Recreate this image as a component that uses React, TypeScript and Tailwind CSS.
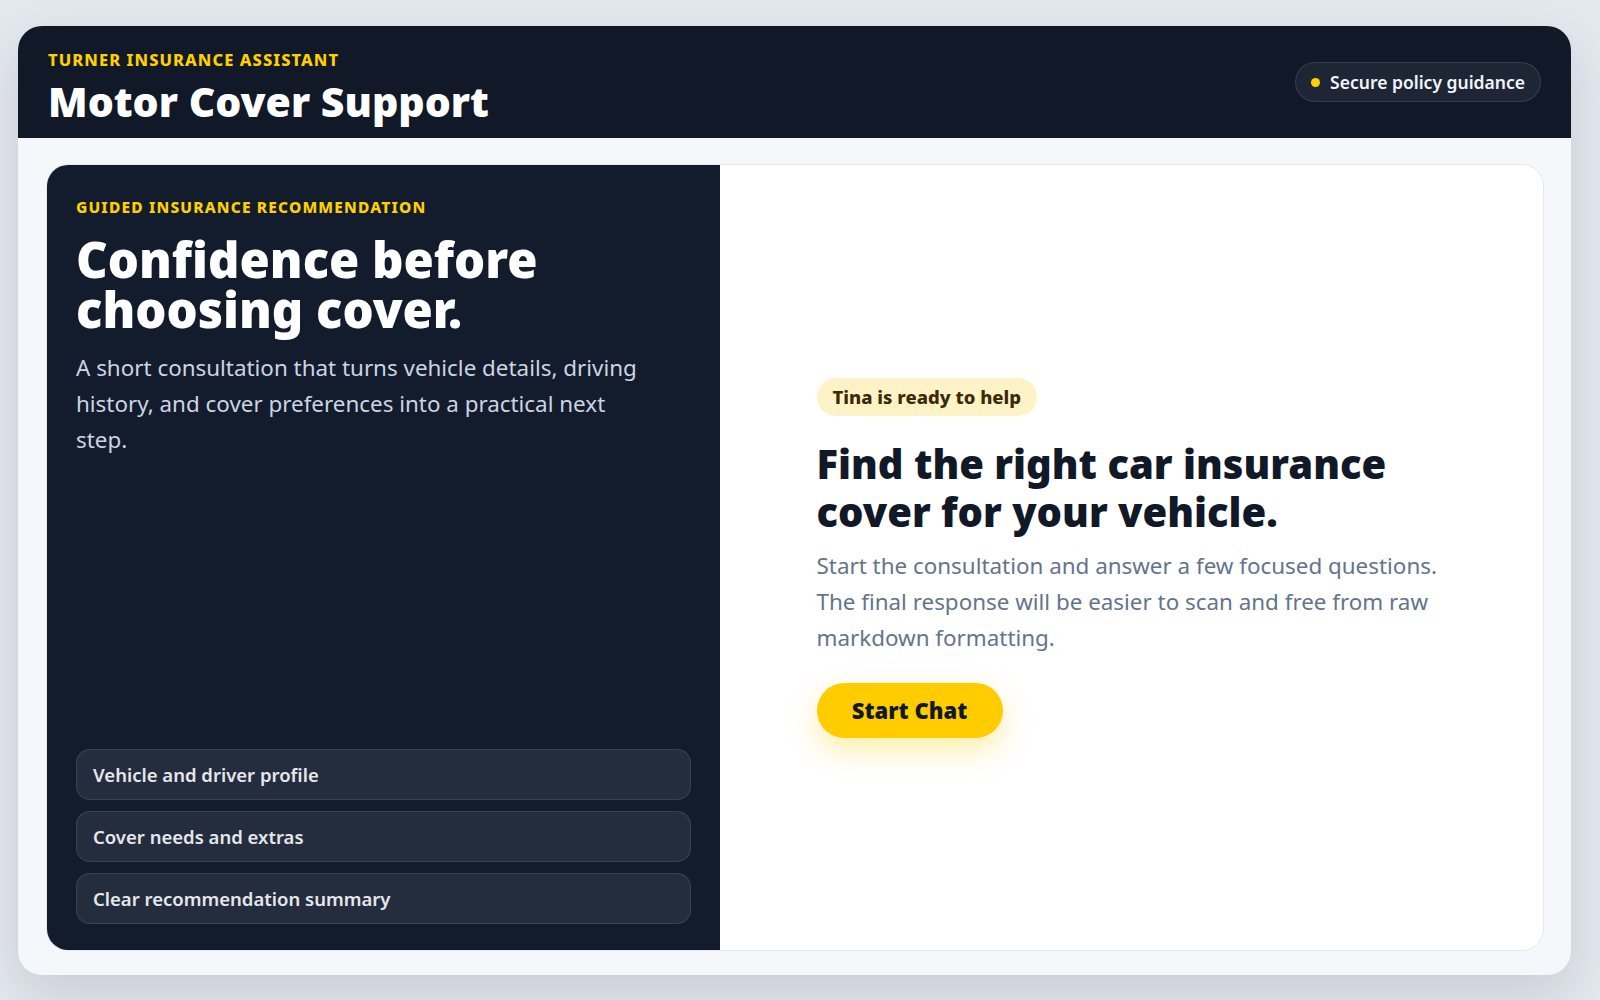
import React from "react";

const steps = [
  "Vehicle and driver profile",
  "Cover needs and extras",
  "Clear recommendation summary",
];

export default function App() {
  return (
    <div className="min-h-screen bg-[#e3e7ee] pl-[18px] pr-[29px] pt-[26px] pb-[25px] font-['Noto_Sans','Liberation_Sans',sans-serif]">
      <div className="flex h-[949px] flex-col overflow-hidden rounded-[24px] bg-[#f5f7fb] shadow-[0_20px_50px_rgba(15,23,42,0.12)]">
        {/* top bar */}
        <header className="flex h-[112px] shrink-0 items-center justify-between bg-[#111827] px-[30px]">
          <div className="self-start pt-[24px]">
            <p className="text-[16.5px] font-extrabold uppercase leading-5 tracking-[0.065em] text-[#ffd000]">
              Turner Insurance Assistant
            </p>
            <h1 className="mt-[7px] text-[41px] font-black leading-[48px] text-white">
              Motor Cover Support
            </h1>
          </div>
          <div className="flex h-[40px] items-center gap-[10px] rounded-full border border-white/10 bg-[#1e2636] px-[15px] text-[17.5px] font-semibold text-[#f1f5f9]">
            <span className="h-[9px] w-[9px] rounded-full bg-[#ffd000]" />
            Secure policy guidance
          </div>
        </header>

        <main className="flex-1 pt-[26px] pb-[24px] pl-[28px] pr-[27px]">
          <div className="grid h-full grid-cols-[673px_1fr] overflow-hidden rounded-[22px] border border-[#e2e8f0] bg-white">
            {/* left intro */}
            <section className="flex flex-col justify-between bg-[#131c2d] px-[29px] pt-[32px] pb-[26px]">
              <div>
                <p className="text-[15.5px] font-extrabold uppercase leading-5 tracking-[0.075em] text-[#ffd000]">
                  Guided insurance recommendation
                </p>
                <h2 className="mt-[17px] text-[49px] font-black leading-[50px] text-white">
                  Confidence before
                  <br />
                  choosing cover.
                </h2>
                <p className="mt-[16px] max-w-[570px] text-[22.4px] leading-[36px] text-[#cbd5e1]">
                  A short consultation that turns vehicle details, driving history, and cover
                  preferences into a practical next step.
                </p>
              </div>
              <div className="flex flex-col gap-[11px]">
                {steps.map((s) => (
                  <div
                    key={s}
                    className="flex h-[51px] items-center rounded-[14px] border border-white/10 bg-[#242d3d] px-4 text-[18.5px] font-semibold text-[#e5e7eb]"
                  >
                    {s}
                  </div>
                ))}
              </div>
            </section>

            {/* right call to action */}
            <section className="flex items-center justify-center">
              <div className="w-[630px]">
                <span className="inline-flex h-[38px] items-center rounded-full bg-[#fef3c7] px-4 text-[18.5px] font-extrabold text-[#3b2a05]">
                  Tina is ready to help
                </span>
                <h2 className="mt-6 text-[40px] font-black leading-[48px] text-[#111827]">
                  Find the right car insurance cover for your vehicle.
                </h2>
                <p className="mt-3 text-[22.4px] leading-[36px] text-[#64748b]">
                  Start the consultation and answer a few focused questions. The final response
                  will be easier to scan and free from raw markdown formatting.
                </p>
                <button className="mt-[27px] h-[55px] w-[186px] rounded-full bg-[#ffcc00] text-[22px] font-black text-[#111827] shadow-[0_12px_30px_rgba(255,204,0,0.35)]">
                  Start Chat
                </button>
              </div>
            </section>
          </div>
        </main>
      </div>
    </div>
  );
}
